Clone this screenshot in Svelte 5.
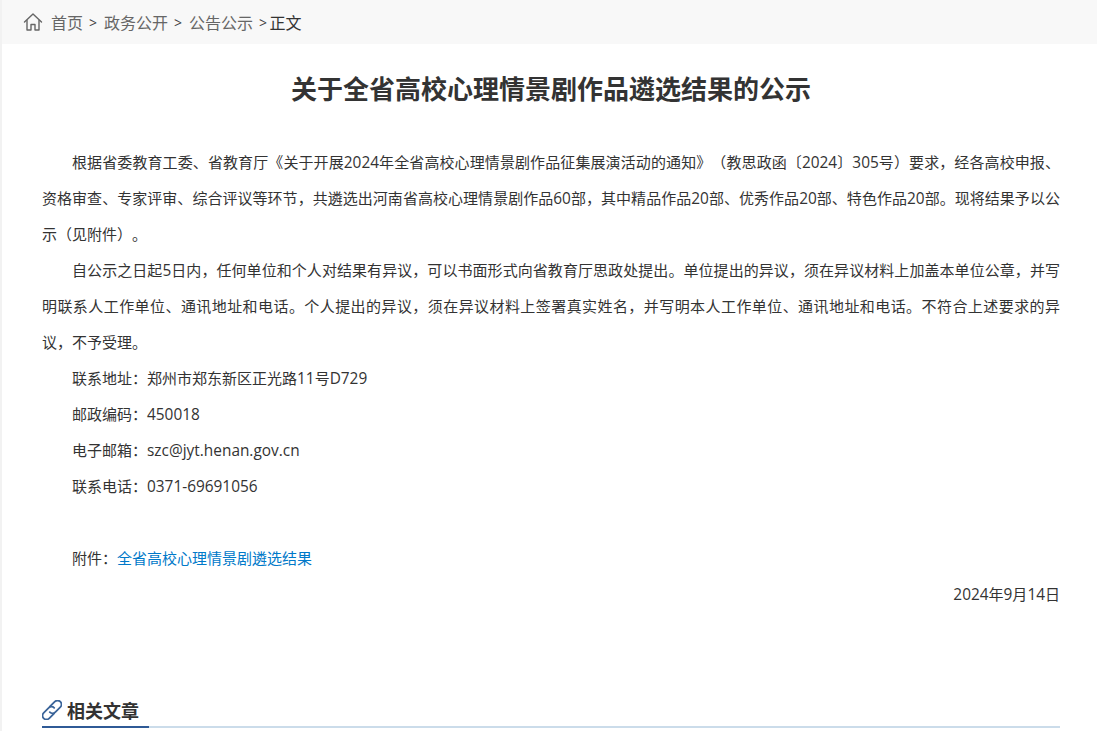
<script>
  const crumbs = ['首页', '政务公开', '公告公示'];
</script>

<div class="page">
  <nav class="crumbs">
    <svg class="home" width="20" height="20" viewBox="0 0 20 20" fill="none" stroke="currentColor" stroke-width="1.4" stroke-linejoin="round" stroke-linecap="round">
      <path d="M1.5 10L10 2l8.5 8" />
      <path d="M4 8.5V18h4v-5.5h4V18h4V8.5" />
    </svg>
    {#each crumbs as c}
      <span class="crumb">{c}</span><span class="sep">&gt;</span>
    {/each}
    <span class="current">正文</span>
  </nav>

  <main class="article">
    <h1>关于全省高校心理情景剧作品遴选结果的公示</h1>

    <div class="body">
      <p>根据省委教育工委、省教育厅《关于开展<span class="n">2024</span>年全省高校心理情景剧作品征集展演活动的通知》（教思政函〔<span class="n">2024</span>〕<span class="n">305</span>号）要求，经各高校申报、资格审查、专家评审、综合评议等环节，共遴选出河南省高校心理情景剧作品<span class="n">60</span>部，其中精品作品<span class="n">20</span>部、优秀作品<span class="n">20</span>部、特色作品<span class="n">20</span>部。现将结果予以公示（见附件）。</p>
      <p>自公示之日起<span class="n">5</span>日内，任何单位和个人对结果有异议，可以书面形式向省教育厅思政处提出。单位提出的异议，须在异议材料上加盖本单位公章，并写明联系人工作单位、通讯地址和电话。个人提出的异议，须在异议材料上签署真实姓名，并写明本人工作单位、通讯地址和电话。不符合上述要求的异议，不予受理。</p>
      <p>联系地址：郑州市郑东新区正光路<span class="n">11</span>号<span class="n">D729</span></p>
      <p>邮政编码：<span class="n">450018</span></p>
      <p>电子邮箱：<span class="n">szc@jyt.henan.gov.cn</span></p>
      <p>联系电话：<span class="n">0371-69691056</span></p>
      <p class="blank">&nbsp;</p>
      <p>附件：<a href="#attachment">全省高校心理情景剧遴选结果</a></p>
      <p class="date"><span class="n">2024</span>年<span class="n">9</span>月<span class="n">14</span>日</p>
    </div>

    <section class="related">
      <h2>
        <svg width="20" height="20" viewBox="2 2 18 18" fill="none" stroke="currentColor" stroke-width="1.6" stroke-linecap="round">
          <path d="M9 8l4.5-4.5a3.5 3.5 0 0 1 5 0a3.5 3.5 0 0 1 0 5L14 13a3.5 3.5 0 0 1-5 0" />
          <path d="M13 14l-4.5 4.5a3.5 3.5 0 0 1-5 0a3.5 3.5 0 0 1 0-5L8 9a3.5 3.5 0 0 1 5 0" />
        </svg>
        <span>相关文章</span>
      </h2>
    </section>
  </main>
</div>

<style>
  :global(html), :global(body) {
    margin: 0;
    height: 100%;
    overflow: hidden;
    background: #fff;
  }

  .page {
    height: 731px;
    overflow: hidden;
    box-sizing: border-box;
    border-left: 2px solid #f2f2f2;
    font-family: "Open Sans", "Noto Sans CJK SC", sans-serif;
    color: #333;
    text-spacing-trim: space-all;
  }

  .crumbs {
    display: flex;
    align-items: center;
    height: 44px;
    padding-left: 21px;
    background: #f8f8f8;
    font-size: 16px;
    color: #666;
  }

  .home {
    margin-right: 8px;
  }

  .sep {
    font-size: 14px;
    color: #444;
  }

  .crumb + .sep {
    margin: 0 7px 0 6px;
  }

  .current {
    margin-left: -4.5px;
    color: #333;
  }

  .article {
    padding: 0 37px 0 40px;
  }

  h1 {
    margin: 0;
    padding-top: 26px;
    height: 60px;
    font-size: 26px;
    line-height: 38px;
    font-weight: 700;
    text-align: center;
    color: #333;
  }

  .body {
    padding-top: 14px;
    font-size: 15px;
    line-height: 36px;
  }

  /* latin runs sit a little wider than the CJK around them */
  .n {
    font-size: 15.4px;
    line-height: 0;
  }

  p {
    margin: 0;
    text-indent: 30px;
    text-align: justify;
  }

  .date {
    text-align: right;
  }

  a {
    color: #0079c9;
    text-decoration: none;
  }

  .related {
    margin-top: 82px;
  }

  h2 {
    display: flex;
    align-items: center;
    gap: 5px;
    height: 34px;
    margin: 0;
    box-sizing: border-box;
    border-bottom: 2px solid #cbdcea;
    font-size: 18px;
    font-weight: 700;
    color: #333;
    position: relative;
  }

  h2 svg {
    color: #3a6499;
  }

  h2::after {
    content: "";
    position: absolute;
    left: 0;
    bottom: -2px;
    width: 107px;
    height: 2px;
    background: #2f5a96;
  }
</style>
